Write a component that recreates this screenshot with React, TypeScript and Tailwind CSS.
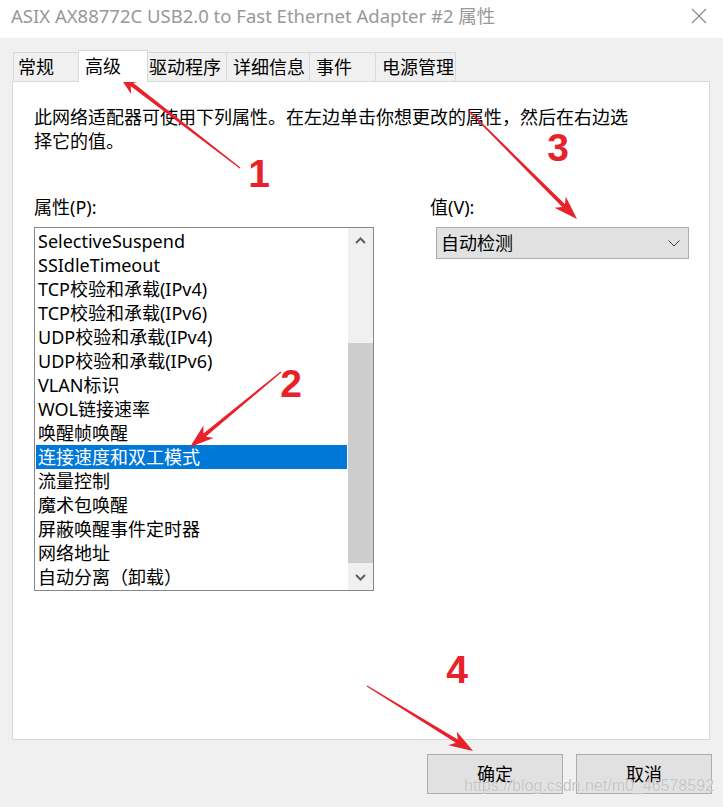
import React from "react";

const items = [
  "SelectiveSuspend",
  "SSIdleTimeout",
  "TCP校验和承载(IPv4)",
  "TCP校验和承载(IPv6)",
  "UDP校验和承载(IPv4)",
  "UDP校验和承载(IPv6)",
  "VLAN标识",
  "WOL链接速率",
  "唤醒帧唤醒",
  "连接速度和双工模式",
  "流量控制",
  "魔术包唤醒",
  "屏蔽唤醒事件定时器",
  "网络地址",
  "自动分离（卸载）",
];

const SELECTED = 9;

// tab widths measured off the dialog
const tabs = [
  { label: "常规", w: "w-[67px]", pl: "pl-[4px]" },
  { label: "高级", w: "w-[70px]", pl: "pl-[6px]", active: true },
  { label: "驱动程序", w: "w-[82px]", pl: "pl-[3px]" },
  { label: "详细信息", w: "w-[84px]", pl: "pl-[6px]" },
  { label: "事件", w: "w-[67px]", pl: "pl-[6px]" },
  { label: "电源管理", w: "w-[81px]", pl: "pl-[6px]" },
];

function arrowPoints(x1: number, y1: number, x2: number, y2: number) {
  const head = 24;
  const hw = 8;
  const w0 = 1.2;
  const w1 = 4;
  const dx = x2 - x1;
  const dy = y2 - y1;
  const len = Math.hypot(dx, dy);
  const ux = dx / len;
  const uy = dy / len;
  const nx = -uy;
  const ny = ux;
  const bx = x2 - ux * head;
  const by = y2 - uy * head;
  const nbx = x2 - ux * (head - 5);
  const nby = y2 - uy * (head - 5);
  const pts = [
    [x1 + (nx * w0) / 2, y1 + (ny * w0) / 2],
    [nbx + (nx * w1) / 2, nby + (ny * w1) / 2],
    [bx + nx * hw, by + ny * hw],
    [x2, y2],
    [bx - nx * hw, by - ny * hw],
    [nbx - (nx * w1) / 2, nby - (ny * w1) / 2],
    [x1 - (nx * w0) / 2, y1 - (ny * w0) / 2],
  ];
  return pts.map((p) => p.map((v) => v.toFixed(1)).join(",")).join(" ");
}

const arrows = [
  { x1: 240, y1: 168, x2: 117, y2: 73 },
  { x1: 281, y1: 372, x2: 190, y2: 447 },
  { x1: 468, y1: 110, x2: 577, y2: 219 },
  { x1: 367, y1: 686, x2: 473, y2: 751 },
];

const digits = [
  { t: "1", x: 259, y: 187 },
  { t: "2", x: 291, y: 397 },
  { t: "3", x: 558, y: 161 },
  { t: "4", x: 457, y: 683 },
];

function Annotations() {
  return (
    <svg
      className="absolute left-0 top-0 pointer-events-none"
      width={723}
      height={807}
      viewBox="0 0 723 807"
    >
      {arrows.map((a, i) => (
        <polygon key={i} points={arrowPoints(a.x1, a.y1, a.x2, a.y2)} fill="#e8222a" />
      ))}
      {digits.map((d) => (
        <text
          key={d.t}
          x={d.x}
          y={d.y}
          textAnchor="middle"
          fontFamily="'Liberation Sans', Arial, sans-serif"
          fontWeight={700}
          fontSize={39}
          fill="#e8222a"
        >
          {d.t}
        </text>
      ))}
    </svg>
  );
}

function Chevron({ up }: { up?: boolean }) {
  return (
    <svg width="11" height="7" viewBox="0 0 11 7">
      <path
        d={up ? "M1 6 L5.5 1.5 L10 6" : "M1 1 L5.5 5.5 L10 1"}
        fill="none"
        stroke="#606060"
        strokeWidth="2"
      />
    </svg>
  );
}

export default function App() {
  return (
    <div className="relative w-[723px] h-[807px] overflow-hidden bg-[#f0f0f0] font-['Noto_Sans','Noto_Sans_CJK_SC',sans-serif] text-black">
      {/* title bar */}
      <div className="h-[38px] bg-white flex items-center justify-between pl-[11px] pr-[16px]">
        <span className="text-[18.5px] leading-[24px] text-[#999999] -mt-[7px]">
          ASIX AX88772C USB2.0 to Fast Ethernet Adapter #2 属性
        </span>
        <svg width="16" height="16" viewBox="0 0 16 16" className="-mt-[6px]">
          <path d="M1 1 L15 15 M15 1 L1 15" stroke="#8a8a8a" strokeWidth="1.2" />
        </svg>
      </div>

      <div className="pl-[12px] pt-[12px]">
        {/* tabs */}
        <div className="relative z-10 flex items-end h-[32px] ml-px -mb-px">
          {tabs.map((t) =>
            t.active ? (
              <div
                key={t.label}
                className={`${t.w} ${t.pl} -mx-[2px] relative z-10 h-[32px] bg-white border-t border-x border-[#d9d9d9] flex items-center text-[18px]`}
              >
                {t.label}
              </div>
            ) : (
              <div
                key={t.label}
                className={`${t.w} ${t.pl} h-[29px] mb-px -ml-px first:ml-0 bg-[#f0f0f0] border-t border-x border-[#d9d9d9] flex items-center text-[18px]`}
              >
                {t.label}
              </div>
            )
          )}
        </div>

        {/* panel */}
        <div className="w-[698px] h-[659px] bg-white border border-[#d9d9d9] pl-[21px] pt-[23px]">
          <p className="text-[18px] leading-[24px]">
            此网络适配器可使用下列属性。在左边单击你想更改的属性，然后在右边选
            <br />
            择它的值。
          </p>

          <div className="flex mt-[42px]">
            <div className="w-[340px]">
              <div className="text-[18px] leading-[24px]">属性(P):</div>
              <div className="mt-[8px] h-[364px] border border-[#828790] flex">
                <div className="flex-1 p-px">
                  {items.map((it, i) => (
                    <div
                      key={it}
                      className={`h-[24px] pl-[2px] text-[18px] leading-[24px] whitespace-nowrap ${
                        i === SELECTED ? "bg-[#0078d7] text-white" : ""
                      }`}
                    >
                      {it}
                    </div>
                  ))}
                </div>
                <div className="w-[25px] bg-[#f0f0f0] flex flex-col">
                  <div className="h-[25px] flex items-center justify-center">
                    <Chevron up />
                  </div>
                  <div className="h-[90px]" />
                  <div className="h-[220px] bg-[#cdcdcd]" />
                  <div className="h-[2px]" />
                  <div className="h-[25px] flex items-center justify-center">
                    <Chevron />
                  </div>
                </div>
              </div>
            </div>

            <div className="ml-[56px]">
              <div className="text-[18px] leading-[24px]">值(V):</div>
              <div className="mt-[8px] ml-[6px] w-[253px] h-[32px] bg-[#e1e1e1] border border-[#adadad] flex items-center justify-between pl-[4px] pr-[8px]">
                <span className="text-[18px] leading-[24px]">自动检测</span>
                <svg width="12" height="7" viewBox="0 0 12 7">
                  <path d="M0.5 0.5 L6 6 L11.5 0.5" fill="none" stroke="#3c3c3c" strokeWidth="1" />
                </svg>
              </div>
            </div>
          </div>
        </div>

        {/* buttons */}
        <div className="flex justify-end gap-[13px] pr-[11px] mt-[14px]">
          <button className="w-[136px] h-[40px] bg-[#e1e1e1] border border-[#adadad] text-[18px] leading-[24px]">
            确定
          </button>
          <button className="w-[136px] h-[40px] bg-[#e1e1e1] border border-[#adadad] text-[18px] leading-[24px]">
            取消
          </button>
        </div>
      </div>

      {/* csdn watermark */}
      <div className="absolute left-[464px] top-[776px] font-['Liberation_Sans',Arial,sans-serif] text-[16px] leading-[20px] text-[#c4c4c4] [text-shadow:0_0_1px_#ffffff] pointer-events-none">
        https://blog.csdn.net/m0_46578592
      </div>

      <Annotations />
    </div>
  );
}
